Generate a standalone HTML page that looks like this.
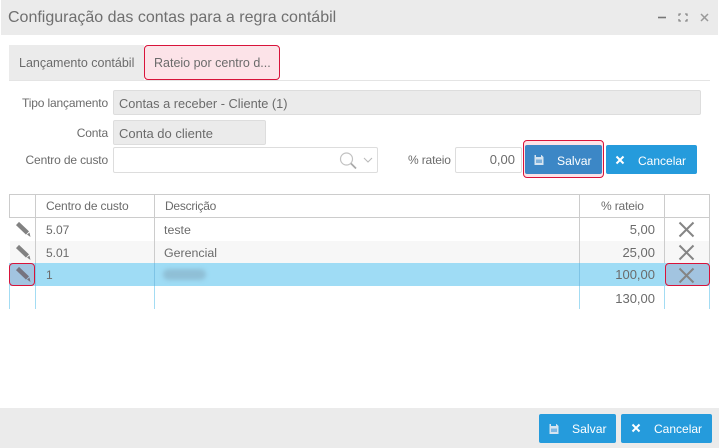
<!DOCTYPE html>
<html><head><meta charset="utf-8">
<style>
html,body{margin:0;padding:0;background:#fff;}
body{width:719px;height:448px;position:relative;overflow:hidden;font-family:"Liberation Sans",sans-serif;color:#6b6b6b;font-size:12.5px;}
.a{position:absolute;box-sizing:border-box;}
.t{position:absolute;white-space:nowrap;line-height:16px;}
.l{font-size:12px;letter-spacing:-.15px;}
.n{font-size:12.4px;}
.r{text-align:right;}
.f{position:absolute;box-sizing:border-box;border:1px solid #ddd;border-radius:2px;background:#ebebeb;}
.btn{position:absolute;box-sizing:border-box;background:#259bdc;border-radius:2px;color:#fff;}
.h{position:absolute;background:#ccc;}
.b{position:absolute;background:#a3dcf3;}
</style></head><body>

<div class="a" style="left:1px;top:0;width:717px;height:35px;background:#ebebeb;"></div>
<div class="t" style="left:8px;top:8px;font-size:16px;line-height:20px;color:#6f6f6f;">Configuração das contas para a regra contábil</div>
<svg class="a" style="left:650px;top:5px;" width="69" height="30" fill="none" stroke="#777">
<path d="M8 12.5h8" stroke-width="1.6"/>
<path d="M29 11V9h2M35 9h2v2M37 14v2h-2M31 16h-2v-2" stroke-width="1.1"/>
<path d="M51 9l7 7M58 9l-7 7" stroke-width="1.5" stroke="#999"/>
</svg>

<div class="a" style="left:9px;top:45px;width:135px;height:36px;background:#ebebeb;"></div>
<div class="t" style="left:19px;top:55px;">Lançamento contábil</div>
<div class="a" style="left:9px;top:80px;width:701px;height:1px;background:#e4e4e4;"></div>
<div class="a" style="left:144px;top:45px;width:136px;height:35px;background:#fce3e8;border:1px solid #d8133a;border-radius:4px;"></div>
<div class="t" style="left:154px;top:55px;">Rateio por centro d...</div>

<div class="t r l" style="right:611px;top:95px;">Tipo lançamento</div>
<div class="f" style="left:113px;top:90px;width:588px;height:25px;"></div>
<div class="t" style="left:119px;top:96px;font-size:12.8px;">Contas a receber - Cliente (1)</div>

<div class="t r l" style="right:611px;top:125px;">Conta</div>
<div class="f" style="left:113px;top:120px;width:153px;height:25px;"></div>
<div class="t" style="left:119px;top:126px;font-size:13px;">Conta do cliente</div>

<div class="t r l" style="right:611px;top:152px;">Centro de custo</div>
<div class="f" style="left:113px;top:147px;width:265px;height:26px;background:#fff;"></div>
<svg class="a" style="left:335px;top:148px;" width="42" height="24" fill="none">
<circle cx="11.5" cy="11" r="6" stroke="#c2c2c2" stroke-width="1.2"/>
<path d="M16 15.5l5 5" stroke="#aaa" stroke-width="1.8"/>
<path d="M29 10l4 4 4-4" stroke="#bbb" stroke-width="1.1"/>
</svg>

<div class="t l" style="left:408px;top:152px;">% rateio</div>
<div class="f" style="left:455px;top:147px;width:67px;height:26px;background:#fff;"></div>
<div class="t r" style="right:204px;top:152px;font-size:13px;">0,00</div>

<div class="a" style="left:523px;top:140px;width:81px;height:38px;background:#fce3e8;border:1.5px solid #d8133a;border-radius:4px;"></div>
<div class="btn" style="left:525px;top:145px;width:77px;height:29px;background:#3c87c6;"></div>
<svg class="a" style="left:533px;top:154px;" width="12" height="12"><path d="M1.5 1h1.5v2h5V1h.5l2 2v8H1.5z" fill="#d5e4f0"/><rect x="3" y="5.5" width="6" height="3.5" fill="#7db0da"/></svg>
<div class="t" style="left:557px;top:153px;color:#fff;font-size:12.2px;">Salvar</div>

<div class="btn" style="left:606px;top:145px;width:91px;height:29px;"></div>
<svg class="a" style="left:615px;top:155px;" width="10" height="10"><path d="M1.5 1.5l7 7M8.5 1.5l-7 7" stroke="#fff" stroke-width="2"/></svg>
<div class="t" style="left:638px;top:153px;color:#fff;font-size:12px;">Cancelar</div>

<!-- table -->
<div class="a" style="left:10px;top:241px;width:699px;height:22px;background:#f7f7f7;"></div>
<div class="a" style="left:10px;top:263px;width:699px;height:23px;background:#9fdcf5;"></div>

<div class="h" style="left:9px;top:194px;width:701px;height:1px;"></div>
<div class="h" style="left:9px;top:217px;width:701px;height:1px;"></div>

<div class="h" style="left:9px;top:194px;width:1px;height:24px;"></div>
<div class="h" style="left:35px;top:194px;width:1px;height:69px;"></div>
<div class="h" style="left:154px;top:194px;width:1px;height:69px;"></div>
<div class="h" style="left:579px;top:194px;width:1px;height:69px;"></div>
<div class="h" style="left:664px;top:194px;width:1px;height:69px;"></div>
<div class="h" style="left:709px;top:194px;width:1px;height:69px;"></div>

<div class="b" style="left:35px;top:263px;width:1px;height:46px;"></div>
<div class="b" style="left:154px;top:263px;width:1px;height:46px;"></div>
<div class="b" style="left:579px;top:263px;width:1px;height:46px;"></div>
<div class="b" style="left:664px;top:263px;width:1px;height:46px;"></div>
<div class="b" style="left:709px;top:263px;width:1px;height:46px;"></div>
<div class="b" style="left:9px;top:263px;width:1px;height:46px;"></div>
<div class="a" style="left:35px;top:263px;width:1px;height:23px;background:#7ec4e6;"></div>
<div class="a" style="left:154px;top:263px;width:1px;height:23px;background:#7ec4e6;"></div>
<div class="a" style="left:579px;top:263px;width:1px;height:23px;background:#7ec4e6;"></div>

<div class="a" style="left:9px;top:263px;width:26px;height:23px;background:#a2c4e0;border:1px solid #d8133a;border-radius:4px;"></div>
<div class="a" style="left:665px;top:263px;width:45px;height:23px;background:#a2c4e0;border:1px solid #d8133a;border-radius:4px;"></div>

<div class="t l" style="left:46px;top:198px;">Centro de custo</div>
<div class="t" style="left:165px;top:198px;font-size:12px;letter-spacing:-.25px;">Descrição</div>
<div class="t l" style="left:601px;top:198px;">% rateio</div>

<div class="t" style="left:46px;top:222px;font-size:12px;">5.07</div>
<div class="t n" style="left:164px;top:222px;">teste</div>
<div class="t r" style="right:64px;top:222px;font-size:13px;">5,00</div>

<div class="t" style="left:46px;top:245px;font-size:12px;">5.01</div>
<div class="t n" style="left:164px;top:245px;">Gerencial</div>
<div class="t r" style="right:64px;top:245px;font-size:13px;">25,00</div>

<div class="t" style="left:46px;top:267px;font-size:12px;">1</div>
<div class="a" style="left:163px;top:269px;width:43px;height:11px;background:#8fbfd6;border-radius:6px;filter:blur(2px);"></div>
<div class="t r" style="right:64px;top:267px;font-size:13px;">100,00</div>
<div class="t r" style="right:64px;top:291px;font-size:13px;">130,00</div>

<svg class="a" style="left:0;top:215px;" width="40" height="75">
<path d="M17.5 8.5l10 9.5" stroke="#828282" stroke-width="4.4"/><path d="M27 19.5l3.5 2.5-1-4.5z" fill="#828282"/>
<path d="M17.5 31.5l10 9.5" stroke="#828282" stroke-width="4.4"/><path d="M27 42.5l3.5 2.5-1-4.5z" fill="#828282"/>
<path d="M17.5 53.5l10 9.5" stroke="#76737f" stroke-width="4.4"/><path d="M27 64.5l3.5 2.5-1-4.5z" fill="#76737f"/>
</svg>
<svg class="a" style="left:670px;top:215px;" width="34" height="75" fill="none" stroke="#858585" stroke-width="2">
<path d="M9.5 7.5l14 14M23.5 7.5l-14 14"/>
<path d="M9.5 30.5l14 14M23.5 30.5l-14 14"/>
<path d="M9.5 53.5l14 14M23.5 53.5l-14 14"/>
</svg>

<!-- footer -->
<div class="a" style="left:0;top:408px;width:719px;height:40px;background:#ebebeb;"></div>
<div class="btn" style="left:539px;top:414px;width:77px;height:29px;"></div>
<svg class="a" style="left:548px;top:423px;" width="12" height="12"><path d="M1.5 1h1.5v2h5V1h.5l2 2v8H1.5z" fill="#d5e4f0"/><rect x="3" y="5.5" width="6" height="3.5" fill="#7db8e4"/></svg>
<div class="t" style="left:572px;top:421px;color:#fff;font-size:12.2px;">Salvar</div>
<div class="btn" style="left:621px;top:414px;width:91px;height:29px;"></div>
<svg class="a" style="left:631px;top:423px;" width="10" height="10"><path d="M1.5 1.5l7 7M8.5 1.5l-7 7" stroke="#fff" stroke-width="2"/></svg>
<div class="t" style="left:654px;top:421px;color:#fff;font-size:12px;">Cancelar</div>

</body></html>
